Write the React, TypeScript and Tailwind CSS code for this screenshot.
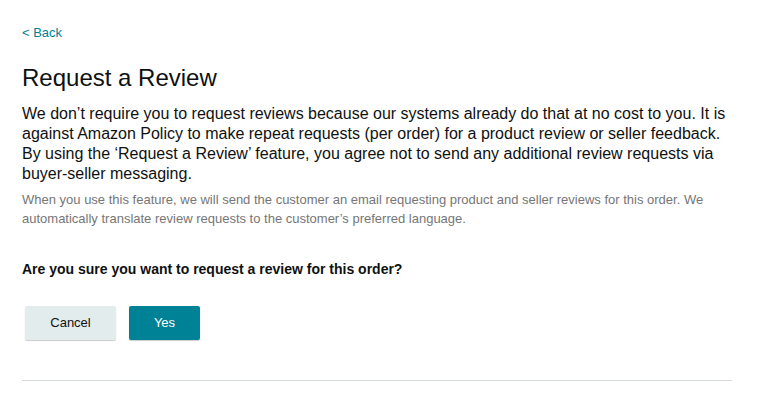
export default function App() {
  return (
    <div className="min-h-screen w-full bg-white" style={{ fontFamily: '"Liberation Sans", Arial, sans-serif' }}>
      <div className="w-[710px] ml-[22px] pt-[25px]">
        <a className="block text-[13px] leading-[16px] text-[#008296]">&lt; Back</a>
        <h1 className="mt-[23px] text-[24px] leading-[28px] text-[#0f1111] font-normal">Request a Review</h1>
        <p className="mt-[12px] text-[16px] leading-[20px] text-[#0f1111]">
          We don’t require you to request reviews because our systems already do that at no cost to you. It is against Amazon Policy to make repeat requests (per order) for a product review or seller feedback. By using the ‘Request a Review’ feature, you agree not to send any additional review requests via buyer-seller messaging.
        </p>
        <p className="mt-[6px] text-[13px] leading-[19px] text-[#767676]">
          When you use this feature, we will send the customer an email requesting product and seller reviews for this order. We automatically translate review requests to the customer’s preferred language.
        </p>
        <p className="mt-[33px] text-[14px] leading-[16px] font-bold text-[#0f1111]">
          Are you sure you want to request a review for this order?
        </p>
        <div className="mt-[29px] ml-[3px] flex gap-[13px]">
          <button className="w-[91px] h-[34px] rounded-[2px] bg-[#e3ecec] text-[13px] text-[#0f1111] shadow-[0_1px_1px_rgba(0,0,0,0.2)]">Cancel</button>
          <button className="w-[71px] h-[34px] rounded-[2px] bg-[#008296] text-[13px] text-white shadow-[0_1px_1px_rgba(0,0,0,0.2)]">Yes</button>
        </div>
        <div className="mt-[40px] h-px bg-[#d5dbdb]" />
      </div>
    </div>
  );
}
